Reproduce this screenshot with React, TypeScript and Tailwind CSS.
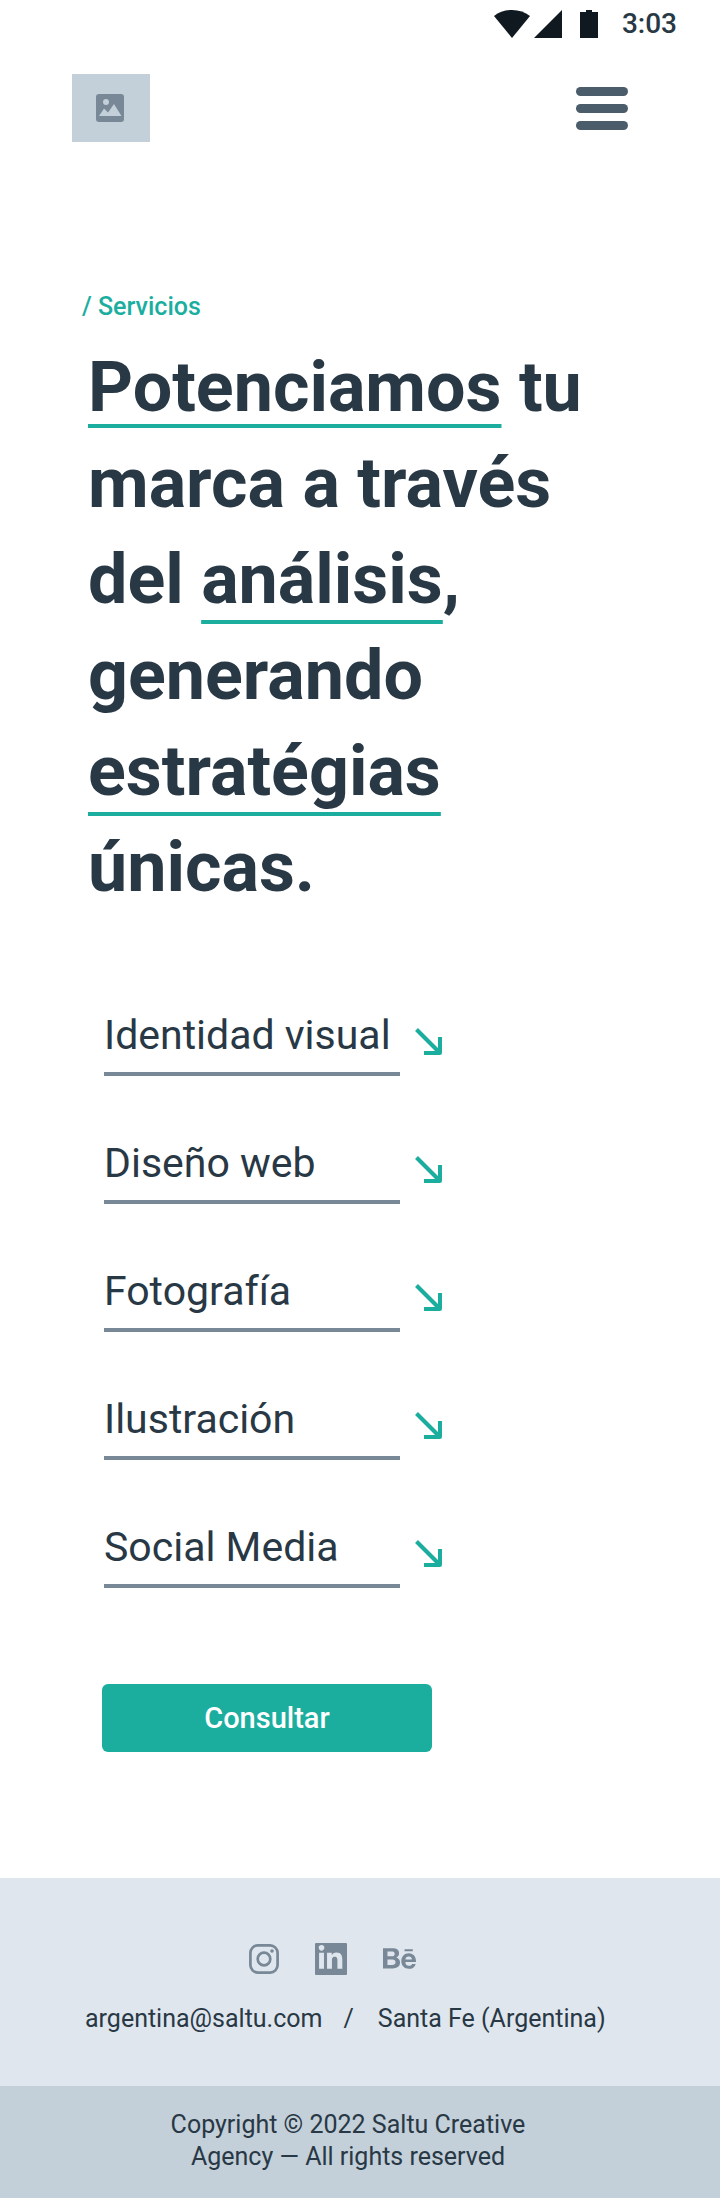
import React from "react";
import { FaBehance, FaLinkedinIn } from "react-icons/fa";

const services = ["Identidad visual", "Diseño web", "Fotografía", "Ilustración", "Social Media"];

type Word = { text: string; mark?: "near" | "far"; after?: string };

const headline: Word[] = [
  { text: "Potenciamos", mark: "near" },
  { text: "tu" },
  { text: "marca" },
  { text: "a" },
  { text: "través" },
  { text: "del" },
  { text: "análisis", mark: "far", after: "," },
  { text: "generando" },
  { text: "estratégias", mark: "far" },
  { text: "únicas." },
];

const marks = {
  near: "underline decoration-[#1bae9f] decoration-4 underline-offset-[13px] [text-decoration-skip-ink:none]",
  far: "underline decoration-[#1bae9f] decoration-4 underline-offset-[17px] [text-decoration-skip-ink:none]",
};

function StatusBar() {
  return (
    <div className="flex h-12 items-center justify-end pr-[43px] text-[#0f191f]">
      <svg viewBox="0 0 36 28" className="h-7 w-9" fill="currentColor" aria-hidden="true">
        <path d="M0 6C5 2 11 0 18 0s13 2 18 6L18 28z" />
      </svg>
      <svg viewBox="0 0 28 28" className="ml-1 h-7 w-7" fill="currentColor" aria-hidden="true">
        <path d="M28 0v28H0z" />
      </svg>
      <svg viewBox="0 0 18 28" className="ml-[18px] h-7 w-[18px]" fill="currentColor" aria-hidden="true">
        <path d="M6 0h6v2h6v26H0V2h6z" />
      </svg>
      <span className="ml-6 text-[28px] leading-8 font-medium text-[#283845]">3:03</span>
    </div>
  );
}

function Header() {
  return (
    <header className="flex items-center justify-between pt-[26px] pr-[92px] pl-[72px]">
      <a href="#inicio" aria-label="Inicio" className="flex h-[68px] w-[78px] items-center justify-center bg-[#c3cfd9] pr-0.5">
        <svg viewBox="0 0 28 28" className="h-7 w-7" aria-hidden="true">
          <rect width="28" height="28" rx="3" fill="#788896" />
          <circle cx="10" cy="8" r="3" fill="#c3cfd9" />
          <path d="M3 22l5-7.500 4 4L18 10l7.500 12z" fill="#c3cfd9" />
        </svg>
      </a>
      <button type="button" aria-label="Menú" className="flex flex-col gap-2 text-[#4b5d6b]">
        <span className="block h-[9px] w-[52px] rounded-full bg-current" />
        <span className="block h-[9px] w-[52px] rounded-full bg-current" />
        <span className="block h-[9px] w-[52px] rounded-full bg-current" />
      </button>
    </header>
  );
}

function ServiceArrow() {
  return (
    <svg viewBox="0 0 28 28" className="h-7 w-7" fill="none" stroke="#1bae9f" strokeWidth="4" aria-hidden="true">
      <path d="M1.500 1.500L24 24" />
      <path d="M9 25h15.500a.5.5 0 0 0 .5-.5V9" />
    </svg>
  );
}

export default function App() {
  return (
    <div className="flex min-h-screen flex-col bg-white font-[Roboto,sans-serif] text-[#283845]">
      <StatusBar />
      <Header />

      <main className="grow pt-[149px] pb-[126px]">
        <p className="pl-[82px] text-[25px] leading-8 font-medium text-[#1bae9f]">/ Servicios</p>
        <h1 className="max-w-[608px] pt-4 pl-[88px] text-[70px] leading-24 font-bold">
          {headline.map((word) => (
            <React.Fragment key={word.text}>
              <span className={word.mark ? marks[word.mark] : undefined}>{word.text}</span>
              {word.after && <span>{word.after}</span>}{" "}
            </React.Fragment>
          ))}
        </h1>

        <ul className="flex flex-col gap-[60px] pt-[93px] pl-[104px]">
          {services.map((name) => (
            <li key={name} className="flex">
              <a href="#servicios" className="inline-flex items-center gap-[15px]">
                <span className="h-[68px] w-[296px] border-b-4 border-[#788896] text-[41px] leading-[54px]">{name}</span>
                <ServiceArrow />
              </a>
            </li>
          ))}
        </ul>

        <div className="pt-24 pl-[102px]">
          <button
            type="button"
            className="block h-[68px] w-[330px] rounded-md bg-[#1bae9f] text-[29px] leading-8 font-medium text-white"
          >
            Consultar
          </button>
        </div>
      </main>

      <footer className="text-[25px] leading-8">
        <div className="bg-[#dfe6ed] px-[85px] pt-16 pb-[51px]">
          <div className="flex items-center justify-center gap-9 pr-14 text-[#788896]">
            <a href="#instagram" aria-label="Instagram">
              <svg viewBox="0 0 30 30" className="h-[30px] w-[30px]" fill="none" stroke="currentColor" strokeWidth="2.700" aria-hidden="true">
                <rect x="1.400" y="1.400" width="27.200" height="27.200" rx="7.500" />
                <circle cx="15" cy="15" r="6.300" />
                <circle cx="23" cy="7" r="1.800" fill="currentColor" stroke="none" />
              </svg>
            </a>
            <a href="#linkedin" aria-label="LinkedIn" className="flex h-8 w-8 items-center justify-center rounded-[1px] bg-[#788896] text-[#dfe6ed]">
              <FaLinkedinIn size={27} />
            </a>
            <a href="#behance" aria-label="Behance">
              <FaBehance size={33} />
            </a>
          </div>
          <div className="flex flex-wrap items-center gap-y-2 pt-7">
            <a href="mailto:argentina@saltu.com">argentina@saltu.com</a>
            <span className="pr-6 pl-[21px]">/</span>
            <span>Santa Fe (Argentina)</span>
          </div>
        </div>
        <div className="bg-[#c3cfd9] pt-[23px] pr-[108px] pb-[25px] pl-[84px]">
          <p className="mx-auto max-w-[400px] text-center">Copyright © 2022 Saltu Creative Agency — All rights reserved</p>
        </div>
      </footer>
    </div>
  );
}
